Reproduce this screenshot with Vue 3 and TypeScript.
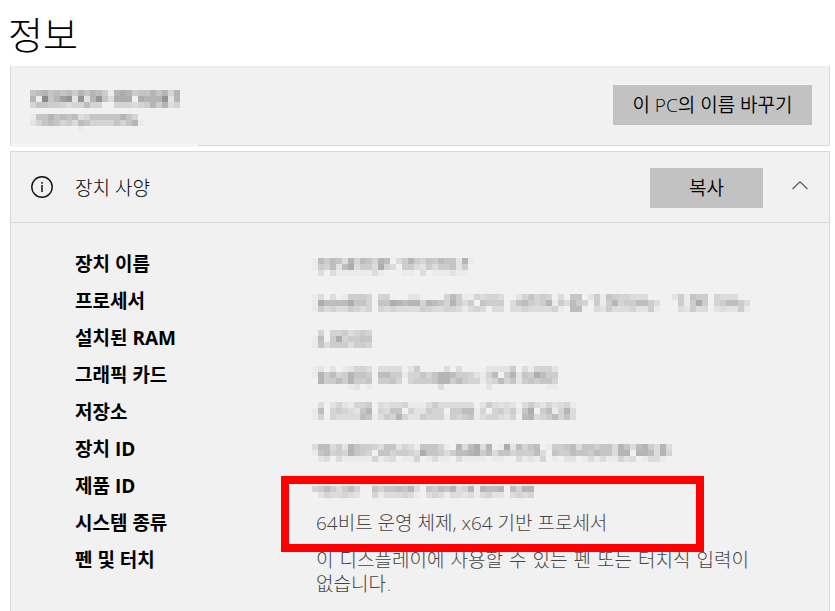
<script setup lang="ts">
import { computed, ref } from 'vue'

interface MosaicLine {
  row: number
  cells: string
}

interface Cell {
  x: number
  y: number
  fill: string
}

// Each hex digit is one mosaic cell: 0 is the card colour, higher is darker.
const shades: Record<string, string> = {
  '1': '#ebebeb', '2': '#e3e3e3', '3': '#dcdcdc', '4': '#d4d4d4',
  '5': '#cdcdcd', '6': '#c5c5c5', '7': '#bdbdbd', '8': '#b5b5b5',
  '9': '#adadad', a: '#a0a0a0', b: '#959595', c: '#8a8a8a',
}

function toCells(lines: MosaicLine[]): Cell[] {
  return lines.flatMap(({ row, cells }) =>
    [...cells].flatMap((digit, x) => (shades[digit] ? [{ x, y: row, fill: shades[digit] }] : [])),
  )
}

const nameCells = computed(() => toCells([
  { row: 0, cells: '6786767586875189856686848' },
  { row: 1, cells: '81c68ab2b28b6399909888b28' },
  { row: 2, cells: '4665543447440044434585834' },
  { row: 4, cells: '166867673466666864' },
  { row: 5, cells: '2467645376444464681' },
  { row: 6, cells: '000000001' },
]))

const specCells = computed(() => toCells([
  { row: 1, cells: '175763847648703585465766281' },
  { row: 2, cells: '15472793553943055325355625' },
  { row: 3, cells: '03031111113100011030111211' },

  { row: 7, cells: '13030155540440002200004751143443002464540306602516544333000025165504333' },
  { row: 8, cells: '1977779664066987884876485350655503675458153754051584557753000515950457753' },
  { row: 9, cells: '1534335434043433335433443134303303343333410770032533342251000325330232251' },

  { row: 13, cells: '0404453454' },
  { row: 14, cells: '1705945566' },
  { row: 15, cells: '1635553554' },

  { row: 19, cells: '12020124430333302500003030000222250314442' },
  { row: 20, cells: '18574586650775514464688755421470582659755' },
  { row: 21, cells: '08557585560556404555688575441347462565664' },
  { row: 22, cells: '000000120100000000000300000002000000000110' },

  { row: 25, cells: '03024214450323341113533333302532320353242341' },
  { row: 26, cells: '17045432680436604225440557714045351690571483' },
  { row: 27, cells: '14043333761354842254441545613443240783457463' },

  { row: 32, cells: '377352865543662431666410837938019274670155673665663863785383' },
  { row: 33, cells: '167454865406645543966535778957366455573065576657663880887384' },
  { row: 34, cells: '02303111114123011401311031111011003121401022013131142301331' },

  { row: 38, cells: '0110011000110101110011010110101111011' },
  { row: 39, cells: '4575357400646676830657683481877807488' },
  { row: 40, cells: '0243343200413334310343133231342203434' },
]))

const labels: string[] = [
  '장치 이름',
  '프로세서',
  '설치된 RAM',
  '그래픽 카드',
  '저장소',
  '장치 ID',
  '제품 ID',
  '시스템 종류',
  '펜 및 터치',
]

const open = ref(true)
</script>

<template>
  <main class="page">
    <h1>정보</h1>

    <section class="card pc">
      <svg class="pc-name" viewBox="0 0 26 7" width="156" height="42" shape-rendering="crispEdges" aria-hidden="true">
        <rect v-for="c in nameCells" :key="`${c.x}-${c.y}`" :x="c.x" :y="c.y" width="1" height="1" :fill="c.fill" />
      </svg>
      <button type="button" class="action">이 PC의 이름 바꾸기</button>
    </section>

    <section class="card specs">
      <header class="specs-head">
        <svg class="info" viewBox="0 0 24 24" width="24" height="24" fill="none" stroke="#111" aria-hidden="true">
          <circle cx="12" cy="11" r="10.2" stroke-width="1.4" />
          <path d="M12 9v7" stroke-width="1.5" />
          <path d="M12 6v1.700" stroke-width="1.5" />
        </svg>
        <h2>장치 사양</h2>
        <button type="button" class="action copy">복사</button>
        <button type="button" class="toggle" :aria-expanded="open" @click="open = !open">
          <svg viewBox="0 0 16 9" width="16" height="9" fill="none" stroke="#555" stroke-width="1.1" aria-hidden="true">
            <path :d="open ? 'M.5 8L8 .8L15.500 8' : 'M.5 1L8 8.200L15.500 1'" />
          </svg>
        </button>
      </header>

      <dl v-if="open" class="list">
        <dt v-for="label in labels" :key="label">{{ label }}</dt>
        <dd class="hidden-values">
          <svg viewBox="0 0 74 41" width="444" height="246" shape-rendering="crispEdges" aria-hidden="true">
            <rect v-for="c in specCells" :key="`${c.x}-${c.y}`" :x="c.x" :y="c.y" width="1" height="1" :fill="c.fill" />
          </svg>
        </dd>
        <dd class="value system">64비트 운영 체제, x64 기반 프로세서<span class="marker"></span></dd>
        <dd class="value pen">이 디스플레이에 사용할 수 있는 펜 또는 터치식 입력이 없습니다.</dd>
      </dl>
    </section>
  </main>
</template>

<style>
body {
  background: #fff;
}
</style>

<style scoped>
.page {
  box-sizing: border-box;
  min-height: 100vh;
  display: flex;
  flex-direction: column;
  padding: 8px 5px 0 10px;
  font-family: "Open Sans", "Noto Sans CJK KR", sans-serif;
  font-size: 19px;
  line-height: 24px;
  color: #000;
}

h1 {
  margin: 0 0 8px -2px;
  font-family: "Noto Sans CJK KR", sans-serif;
  font-size: 38px;
  font-weight: 300;
  line-height: 50px;
}

.card {
  background: #f1f1f1;
  border: 1px solid #d9d9d9;
}

.pc {
  position: relative;
  display: flex;
  align-items: flex-start;
  justify-content: space-between;
  border-top-color: #ebebeb;
  padding: 18px 17px 13px 19px;
  margin-bottom: 5px;
}

.pc::after {
  content: "";
  position: absolute;
  left: 0;
  bottom: -2px;
  width: 187px;
  height: 3px;
  background: #f5f5f5;
}

.pc-name {
  display: block;
  margin-top: 5px;
}

button {
  margin: 0;
  padding: 0;
  border: 0;
  font: inherit;
  color: inherit;
}

.action {
  height: 40px;
  padding: 0 18px;
  background: #c2c2c2;
  font-weight: 350;
  white-space: nowrap;
}

.pc .action {
  min-width: 199px;
}

.specs {
  flex: 1;
  border-bottom: 0;
}

.specs-head {
  display: flex;
  align-items: center;
  height: 68px;
  padding: 2px 14px 0 19px;
  border-bottom: 1px solid #d9d9d9;
}

h2 {
  flex: 1;
  margin: 0 0 0 21px;
  font-size: 19px;
  font-weight: 300;
}

.info {
  display: block;
}

.copy {
  width: 113px;
}

.toggle {
  display: flex;
  justify-content: center;
  width: 30px;
  padding: 6px 0 12px;
  margin-left: 22px;
  background: none;
}

.list {
  display: grid;
  grid-template-columns: 237px 1fr;
  row-gap: 13px;
  margin: 0;
  padding: 29px 56px 15px 64px;
}

dt {
  grid-column: 1;
  font-weight: 700;
}

dd {
  grid-column: 2;
  margin: 0;
}

.hidden-values {
  grid-row: 1 / span 7;
}

.hidden-values svg {
  display: block;
}

.value {
  padding-left: 4px;
  font-weight: 300;
  color: #444;
  word-break: keep-all;
}

.system {
  position: relative;
  grid-row: 8;
}

.pen {
  grid-row: 9;
  font-family: "DejaVu Sans", "Noto Sans CJK KR", sans-serif;
}

.marker {
  position: absolute;
  left: -31px;
  top: -35px;
  box-sizing: border-box;
  width: 423px;
  height: 76px;
  border: 8px solid #f00;
}
</style>
